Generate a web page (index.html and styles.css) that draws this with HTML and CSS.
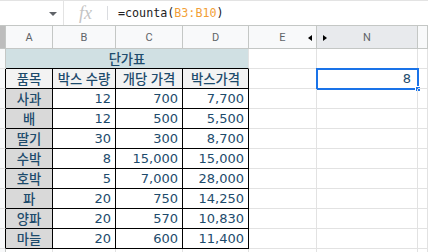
FILE: index.html
```html
<!DOCTYPE html>
<html lang="ko">
<head>
    <meta charset="UTF-8">
    <meta name="viewport" content="width=device-width, initial-scale=1.0">
    <title>단가표</title>
    <link rel="stylesheet" href="styles.css">
</head>
<body>
    <!-- 수식 입력줄 -->
    <div class="formula-bar">
        <div class="name-box"><span class="caret"></span></div>
        <div class="fx">fx</div>
        <div class="formula">=counta(<span class="ref">B3:B10</span>)</div>
    </div>

    <div class="sheet">
        <!-- 열 머리글 -->
        <div class="corner"></div>
        <div class="ch">A</div>
        <div class="ch">B</div>
        <div class="ch">C</div>
        <div class="ch">D</div>
        <div class="ch">E<span class="arrow-left"></span></div>
        <div class="ch sel">N<span class="arrow-right"></span></div>
        <div class="ch"></div>

        <!-- 1행 -->
        <div class="rh"></div>
        <div class="c title">단가표</div>
        <div class="c"></div>
        <div class="c"></div>
        <div class="c"></div>

        <!-- 2행 -->
        <div class="rh edge"></div>
        <div class="c t hd">품목</div>
        <div class="c t hd">박스 수량</div>
        <div class="c t hd">개당 가격</div>
        <div class="c t hd">박스가격</div>
        <div class="c"></div>
        <div class="c num active">8<span class="handle"></span></div>
        <div class="c"></div>

        <div class="rh edge"></div>
        <div class="c t lbl">사과</div>
        <div class="c t num">12</div>
        <div class="c t num">700</div>
        <div class="c t num">7,700</div>
        <div class="c"></div><div class="c"></div><div class="c"></div>

        <div class="rh edge"></div>
        <div class="c t lbl">배</div>
        <div class="c t num">12</div>
        <div class="c t num">500</div>
        <div class="c t num">5,500</div>
        <div class="c"></div><div class="c"></div><div class="c"></div>

        <div class="rh edge"></div>
        <div class="c t lbl">딸기</div>
        <div class="c t num">30</div>
        <div class="c t num">300</div>
        <div class="c t num">8,700</div>
        <div class="c"></div><div class="c"></div><div class="c"></div>

        <div class="rh edge"></div>
        <div class="c t lbl">수박</div>
        <div class="c t num">8</div>
        <div class="c t num">15,000</div>
        <div class="c t num">15,000</div>
        <div class="c"></div><div class="c"></div><div class="c"></div>

        <div class="rh edge"></div>
        <div class="c t lbl">호박</div>
        <div class="c t num">5</div>
        <div class="c t num">7,000</div>
        <div class="c t num">28,000</div>
        <div class="c"></div><div class="c"></div><div class="c"></div>

        <div class="rh edge"></div>
        <div class="c t lbl">파</div>
        <div class="c t num">20</div>
        <div class="c t num">750</div>
        <div class="c t num">14,250</div>
        <div class="c"></div><div class="c"></div><div class="c"></div>

        <div class="rh edge"></div>
        <div class="c t lbl">양파</div>
        <div class="c t num">20</div>
        <div class="c t num">570</div>
        <div class="c t num">10,830</div>
        <div class="c"></div><div class="c"></div><div class="c"></div>

        <div class="rh edge"></div>
        <div class="c t lbl">마늘</div>
        <div class="c t num">20</div>
        <div class="c t num">600</div>
        <div class="c t num">11,400</div>
        <div class="c"></div><div class="c"></div><div class="c"></div>

        <div class="rh"></div>
        <div class="c"></div><div class="c"></div><div class="c"></div><div class="c"></div>
        <div class="c"></div><div class="c"></div><div class="c"></div>
    </div>
</body>
</html>
```

FILE: styles.css
```css
* {
    box-sizing: border-box;
}
html, body {
    height: 252px;
}
body {
    margin: 0;
    padding: 0;
    background: #fff;
    overflow: hidden;
    font-family: "DejaVu Sans", "Noto Sans CJK KR", sans-serif;
    color: #1d4b6c;
}

/* 수식 입력줄 */
.formula-bar {
    height: 26px;
    display: flex;
    align-items: center;
    border-top: 1px solid #e3e3e3;
    border-bottom: 1px solid #c4c7c5;
}
.name-box {
    width: 64px;
    height: 100%;
    border-right: 1px solid #e3e3e3;
    position: relative;
}
.caret {
    position: absolute;
    left: 49px;
    top: 11px;
    border-left: 4px solid transparent;
    border-right: 4px solid transparent;
    border-top: 4px solid #5f6368;
}
.fx {
    width: 44px;
    height: 14px;
    border-right: 1px solid #dadce0;
    text-align: center;
    font-family: "Liberation Serif", serif;
    font-style: italic;
    font-size: 18px;
    line-height: 14px;
    color: #c4c4c4;
}
.formula {
    padding-left: 10px;
    font-family: "DejaVu Sans Mono", monospace;
    font-size: 11.7px;
    color: #222;
}
.formula .ref {
    color: #f29f38;
}

/* 시트 그리드 */
.sheet {
    display: grid;
    grid-template-columns: 6px 47px 63px 67px 66px 68px 101px 10px;
    grid-template-rows: 23px repeat(11, 20px);
}
.corner {
    background: #bdbdbd;
    border-right: 1px solid #c4c7c5;
    border-bottom: 1px solid #c4c7c5;
}
.ch {
    position: relative;
    background: #f8f9fa;
    border-right: 1px solid #c4c7c5;
    border-bottom: 1px solid #c4c7c5;
    display: flex;
    align-items: center;
    justify-content: center;
    font-family: Roboto, "Liberation Sans", sans-serif;
    font-size: 11px;
    color: #5f6368;
}
.ch.sel {
    background: #e8eaed;
}
.arrow-left {
    position: absolute;
    right: 4px;
    top: 9px;
    border-top: 3px solid transparent;
    border-bottom: 3px solid transparent;
    border-right: 4px solid #000;
}
.arrow-right {
    position: absolute;
    left: 6px;
    top: 9px;
    border-top: 3px solid transparent;
    border-bottom: 3px solid transparent;
    border-left: 4px solid #000;
}
.rh {
    background: #f8f9fa;
    border-right: 1px solid #c4c7c5;
    border-bottom: 1px solid #e2e2e2;
}
.rh.edge {
    border-right-color: #000;
}
.c {
    position: relative;
    border-right: 1px solid #e2e2e2;
    border-bottom: 1px solid #e2e2e2;
    display: flex;
    align-items: center;
    font-size: 13px;
    white-space: nowrap;
}
.title {
    grid-column: span 4;
    justify-content: center;
    background: #d0e0e3;
    border-bottom-color: #000;
    font-family: "Noto Sans CJK KR", sans-serif;
    font-size: 13.3px;
    font-weight: 500;
}
.t {
    border-right-color: #000;
    border-bottom-color: #000;
}
.hd {
    justify-content: center;
    background: #f3f3f3;
    font-family: "Noto Sans CJK KR", sans-serif;
    font-size: 13.3px;
    font-weight: 500;
}
.lbl {
    justify-content: center;
    background: #d9d9d9;
    font-family: "Noto Sans CJK KR", sans-serif;
    font-size: 13.3px;
    font-weight: 500;
}
.num {
    justify-content: flex-end;
    padding-right: 4px;
}

/* 선택된 셀 */
.active {
    outline: 2px solid #1a73e8;
    outline-offset: -1px;
    padding-right: 6px;
}
.handle {
    position: absolute;
    right: -4px;
    bottom: -4px;
    width: 6px;
    height: 6px;
    background: #1a73e8;
    border: 1px solid #fff;
}
```
